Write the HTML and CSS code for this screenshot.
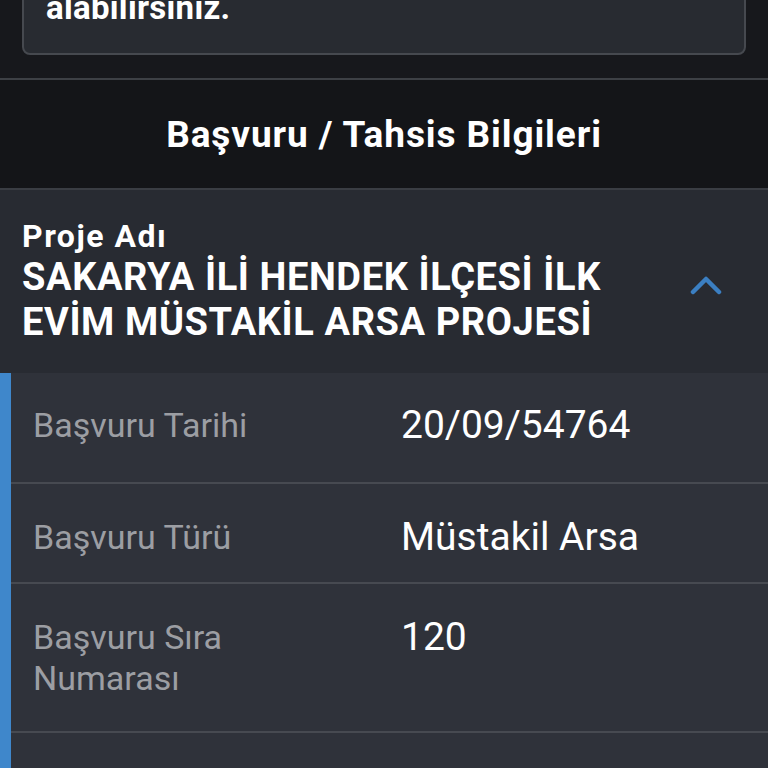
FILE: index.html
```html
<!DOCTYPE html>
<html>
<head>
    <title>Başvuru / Tahsis Bilgileri</title>
    <meta charset="UTF-8">
    <meta name="viewport" content="width=device-width, initial-scale=1.0">
    <link rel="stylesheet" href="styles.css">
</head>
<body>
    <div class="notice-wrap">
        <div class="notice">
            <p>alabilirsiniz.</p>
        </div>
    </div>

    <div class="section-title">Başvuru / Tahsis Bilgileri</div>

    <div class="accordion">
        <div class="acc-head">
            <div class="acc-text">
                <div class="acc-label">Proje Adı</div>
                <div class="acc-name">SAKARYA İLİ HENDEK İLÇESİ İLK EVİM MÜSTAKİL ARSA PROJESİ</div>
            </div>
            <svg class="chevron" width="32" height="20" viewBox="0 0 32 20">
                <polyline points="3,17 16,4 29,17" fill="none" stroke="#3b7fc2" stroke-width="4.5" stroke-linecap="round" stroke-linejoin="round"/>
            </svg>
        </div>

        <div class="acc-body">
            <div class="row row-date">
                <div class="label">Başvuru Tarihi</div>
                <div class="value">20/09/54764</div>
            </div>
            <div class="row row-type">
                <div class="label">Başvuru Türü</div>
                <div class="value">Müstakil Arsa</div>
            </div>
            <div class="row row-order">
                <div class="label">Başvuru Sıra Numarası</div>
                <div class="value">120</div>
            </div>
            <div class="row row-next"></div>
        </div>
    </div>
</body>
</html>
```

FILE: styles.css
```css
body {
    margin: 0;
    background: #17181c;
    font-family: Roboto, 'Liberation Sans', sans-serif;
    color: #ffffff;
    overflow: hidden;
}
.notice-wrap {
    padding: 0 22px;
    margin-top: -33px;
}
.notice {
    background: #282b31;
    border: 2px solid #46494f;
    border-radius: 8px;
    padding: 19px 22px 25px 22px;
}
.notice p {
    margin: 0;
    font-size: 33px;
    font-weight: 700;
    line-height: 40px;
    letter-spacing: 0.3px;
}
.section-title {
    margin-top: 23px;
    border-top: 2px solid #3d4045;
    border-bottom: 2px solid #3a3d43;
    background: #141518;
    height: 108px;
    display: flex;
    align-items: center;
    justify-content: center;
    font-size: 37px;
    font-weight: 700;
    letter-spacing: 0.9px;
}
.acc-head {
    background: #282b32;
    height: 183px;
    box-sizing: border-box;
    padding: 27px 46px 0 22px;
    display: flex;
    align-items: flex-start;
    justify-content: space-between;
}
.acc-text {
    width: 610px;
}
.acc-label {
    font-size: 32px;
    font-weight: 700;
    line-height: 38px;
    letter-spacing: 1.5px;
}
.acc-name {
    font-size: 38px;
    font-weight: 700;
    line-height: 45px;
    letter-spacing: 0.6px;
}
.chevron {
    margin-top: 58px;
}
.acc-body {
    background: #2f323a;
    border-left: 11px solid #3f87cb;
}
.row {
    display: flex;
    box-sizing: border-box;
    padding: 32px 0 0 22px;
    border-bottom: 2px solid #474a51;
}
.row-date { height: 111px; }
.row-type { height: 100px; padding-top: 33px; }
.row-order { height: 149px; padding-top: 33px; }
.row-next { height: 60px; border-bottom: none; }
.label {
    width: 368px;
    font-size: 34px;
    line-height: 41px;
    color: #9c9ea3;
    padding-right: 40px;
    box-sizing: border-box;
}
.value {
    font-size: 39px;
    line-height: 41px;
    color: #ffffff;
}
```
